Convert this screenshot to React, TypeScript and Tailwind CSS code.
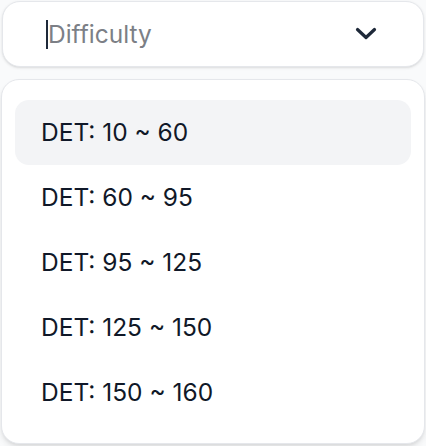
import React from "react";

const items = ["DET: 10 ~ 60", "DET: 60 ~ 95", "DET: 95 ~ 125", "DET: 125 ~ 150", "DET: 150 ~ 160"];

export default function App() {
  return (
    <div
      className="w-[426px] h-[446px] bg-gray-50 flex flex-col overflow-hidden"
      style={{ fontFamily: "Inter, 'Noto Sans', sans-serif" }}
    >
      <div className="mx-[2px] mt-[1px] h-[66px] bg-white border border-gray-200 rounded-[18px] flex items-center pl-[43px] pr-[46px] shadow-sm">
        <div className="w-[2px] h-[29px] bg-gray-800" />
        <span className="text-[24.5px] text-[#7c7f86] leading-none flex-1">Difficulty</span>
        <svg width="22" height="14" viewBox="0 0 22 14" className="text-gray-800">
          <polyline points="2.5,2.5 11,10.5 19.5,2.5" fill="none" stroke="currentColor" strokeWidth="3.2" strokeLinecap="round" strokeLinejoin="round" />
        </svg>
      </div>
      <div className="mx-[1px] mt-[12px] bg-white border border-gray-200 rounded-[18px] shadow-md px-[13px] pt-[20px] pb-[18px] flex flex-col">
        {items.map((t, i) => (
          <div
            key={t}
            className={`h-[65px] flex items-center pl-[26px] rounded-[14px] text-[24.5px] text-gray-900 ${i === 0 ? "bg-gray-100" : ""}`}
          >
            {t}
          </div>
        ))}
      </div>
    </div>
  );
}
